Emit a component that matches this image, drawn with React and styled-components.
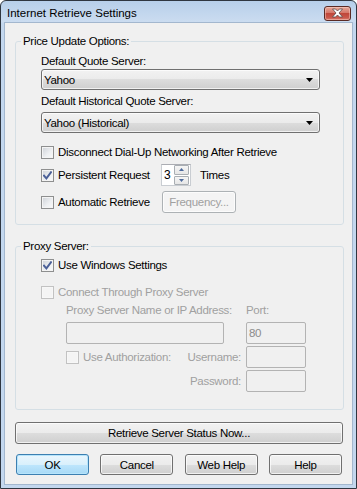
import styled, { createGlobalStyle } from "styled-components";

const GlobalStyle = createGlobalStyle`
  html, body {
    margin: 0;
    padding: 0;
    background: #ffffff;
  }
  body {
    font-family: "Liberation Sans", Arial, sans-serif;
  }
`;

const Window = styled.div`
  box-sizing: border-box;
  width: 357px;
  height: 489px;
  border: 1px solid #2f3640;
  border-radius: 6px 6px 0 0;
  background: linear-gradient(#b7cfea, #cbdcf0 21px, #c3d7ee 22px, #c3d7ee);
  display: flex;
  flex-direction: column;
  overflow: hidden;
`;

const TitleBar = styled.div`
  height: 21px;
  display: flex;
  align-items: center;
  justify-content: space-between;
  padding: 0 5px 0 6px;
`;

const Title = styled.span`
  font-size: 11.5px;
  color: #000;
  padding-top: 3px;
`;

const CloseButton = styled.div`
  box-sizing: border-box;
  width: 27px;
  height: 15px;
  margin-top: 3px;
  border: 1px solid #5a2a24;
  border-radius: 3px;
  background: linear-gradient(#e6a898, #d5776a 45%, #c0473a 50%, #c8564a 80%, #d97d6e);
  box-shadow: inset 0 0 0 1px rgba(255, 220, 210, 0.45);
  display: flex;
  align-items: center;
  justify-content: center;
`;

const Client = styled.div`
  flex: 1;
  margin: 0 3px 3px;
  border: 1px solid #a3b7ce;
  background: #f0f0f0;
  padding: 11px 8px 0 10px;
  display: flex;
  flex-direction: column;
  font-size: 11.5px;
  letter-spacing: -0.3px;
  color: #000;
`;

const Group = styled.fieldset`
  margin: ${(p) => p.$top || 0}px 0 0;
  padding: 0 8px ${(p) => p.$bottom}px 5px;
  border: 1px solid #d5dfe5;
  border-radius: 3px;
  min-width: 0;
`;

const Legend = styled.legend`
  padding: 0 2px;
  line-height: 14px;
`;

const GroupBody = styled.div`
  padding-left: 20px;
  padding-top: ${(p) => p.$top || 0}px;
  display: flex;
  flex-direction: column;
  align-items: flex-start;
`;

const FieldLabel = styled.div`
  line-height: 14px;
  margin-top: ${(p) => p.$top || 0}px;
  color: ${(p) => (p.$disabled ? "#a0a0a0" : "#000")};
`;

const Combo = styled.div`
  box-sizing: border-box;
  width: 279px;
  height: 21px;
  margin-top: ${(p) => p.$top || 0}px;
  padding: 0 6px 0 2px;
  border: 1px solid #707070;
  border-radius: 3px;
  background: linear-gradient(#f2f2f2, #ebebeb 50%, #dddddd 50%, #cfcfcf);
  box-shadow: inset 0 0 0 1px rgba(255, 255, 255, 0.7);
  display: flex;
  align-items: center;
  justify-content: space-between;
`;

const Row = styled.div`
  display: flex;
  align-items: center;
  height: ${(p) => p.$h || 16}px;
  margin-top: ${(p) => p.$top || 0}px;
`;

const CheckLabel = styled.label`
  display: flex;
  align-items: center;
  width: ${(p) => (p.$w ? `${p.$w}px` : "auto")};
  color: ${(p) => (p.$disabled ? "#a0a0a0" : "#000")};
`;

const Box = styled.span`
  box-sizing: border-box;
  width: 13px;
  height: 13px;
  flex: none;
  margin-right: 4px;
  border: 1px solid ${(p) => (p.$disabled ? "#c2c2c2" : "#8e8f8f")};
  background: ${(p) =>
    p.$disabled
      ? "#f4f4f4"
      : "linear-gradient(135deg, #cdd1d7, #eef0f2 60%, #fafafa)"};
  box-shadow: inset 0 0 0 1px ${(p) => (p.$disabled ? "#f7f7f7" : "#f4f4f4")};
  display: flex;
  align-items: center;
  justify-content: center;
`;

const Spinner = styled.div`
  box-sizing: border-box;
  width: 30px;
  height: 22px;
  display: flex;
  border: 1px solid #c9cdd2;
  border-top-color: #abadb3;
  background: #ffffff;
`;

const SpinValue = styled.div`
  flex: 1;
  padding: 3px 0 0 2px;
  font-size: 12px;
`;

const SpinButtons = styled.div`
  width: 15px;
  display: flex;
  flex-direction: column;
  gap: 1px;
  padding: 0 1px 0 0;
`;

const SpinButton = styled.div`
  box-sizing: border-box;
  flex: 1;
  border: 1px solid #a9aeb3;
  border-radius: 1px;
  background: linear-gradient(#f5f5f5, #e6e6e6);
  display: flex;
  align-items: center;
  justify-content: center;
`;

const Suffix = styled.span`
  margin-left: 9px;
`;

const PushButton = styled.button`
  box-sizing: border-box;
  width: ${(p) => (p.$w ? `${p.$w}px` : "100%")};
  height: ${(p) => p.$h || 21}px;
  margin: 0;
  padding: 0;
  border: 1px solid
    ${(p) => (p.$primary ? "#3c7fb1" : p.disabled ? "#adb2b5" : "#707070")};
  border-radius: 3px;
  background: ${(p) =>
    p.$primary
      ? "linear-gradient(#eaf6fd, #d9f0fc 50%, #bee6fd 50%, #a7d9f5)"
      : p.disabled
      ? "#f4f4f4"
      : "linear-gradient(#f2f2f2, #ebebeb 50%, #dddddd 50%, #cfcfcf)"};
  box-shadow: inset 0 0 0 1px
    ${(p) => (p.$primary ? "#b6e4fb" : "rgba(255, 255, 255, 0.7)")};
  font: inherit;
  letter-spacing: inherit;
  color: ${(p) => (p.disabled ? "#a0a0a0" : "#000")};
`;

const ProxyGrid = styled.div`
  margin: 3px 0 0 25px;
  display: grid;
  grid-template-columns: 180px 60px;
  grid-template-rows: 17px 22px 22px 22px;
  row-gap: 2px;
  color: #a0a0a0;
`;

const GridLabel = styled.div`
  line-height: 14px;
`;

const Edit = styled.div`
  box-sizing: border-box;
  width: ${(p) => p.$w}px;
  height: 22px;
  border: 1px solid #b3b3b3;
  border-radius: 2px;
  background: #f0f0f0;
  padding: 3px 0 0 2px;
  line-height: 14px;
  color: #8c8c8c;
`;

const AuthCell = styled.div`
  display: flex;
  align-items: center;
  justify-content: space-between;
  padding-right: 5px;
`;

const RightLabel = styled.div`
  display: flex;
  align-items: center;
  justify-content: flex-end;
  padding-right: 5px;
`;

const StatusArea = styled.div`
  margin-top: 12px;
  padding-right: 1px;
`;

const ButtonRow = styled.div`
  margin-top: 10px;
  padding: 0 2px 0 1px;
  display: flex;
  justify-content: space-between;
`;

function CloseGlyph() {
  return (
    <svg width="13" height="10" viewBox="0 0 13 10">
      <path
        d="M1.5 1 H4.5 L6.5 3 L8.5 1 H11.5 L8 5 L11.5 9 H8.5 L6.5 7 L4.5 9 H1.5 L5 5 Z"
        fill="#ffffff"
        stroke="#5b4b4b"
        strokeWidth="0.8"
        strokeLinejoin="round"
      />
    </svg>
  );
}

function DropArrow() {
  return (
    <svg width="7" height="4" viewBox="0 0 7 4">
      <polygon points="0,0 7,0 3.5,4" fill="#000000" />
    </svg>
  );
}

function Tick() {
  return (
    <svg width="9" height="9" viewBox="0 0 9 9">
      <path
        d="M1 4.6 L3.4 7.4 L8 1.2"
        fill="none"
        stroke="#4a5f97"
        strokeWidth="1.9"
        strokeLinecap="square"
      />
    </svg>
  );
}

function SpinArrow({ up }) {
  return (
    <svg width="5" height="3" viewBox="0 0 5 3">
      <polygon points={up ? "0,3 5,3 2.5,0" : "0,0 5,0 2.5,3"} fill="#4d6a9c" />
    </svg>
  );
}

function Check({ label, checked, disabled, width }) {
  return (
    <CheckLabel $w={width} $disabled={disabled}>
      <Box $disabled={disabled}>{checked && <Tick />}</Box>
      {label}
    </CheckLabel>
  );
}

export default function App() {
  return (
    <>
      <GlobalStyle />
      <Window>
        <TitleBar>
          <Title>Internet Retrieve Settings</Title>
          <CloseButton>
            <CloseGlyph />
          </CloseButton>
        </TitleBar>
        <Client>
          <Group $bottom={11}>
            <Legend>Price Update Options:</Legend>
            <GroupBody $top={6}>
              <FieldLabel>Default Quote Server:</FieldLabel>
              <Combo $top={1}>
                <span>Yahoo</span>
                <DropArrow />
              </Combo>
              <FieldLabel $top={4}>Default Historical Quote Server:</FieldLabel>
              <Combo $top={4}>
                <span>Yahoo (Historical)</span>
                <DropArrow />
              </Combo>
              <Row $top={11}>
                <Check label="Disconnect Dial-Up Networking After Retrieve" />
              </Row>
              <Row $top={4} $h={22}>
                <Check label="Persistent Request" checked width={120} />
                <Spinner>
                  <SpinValue>3</SpinValue>
                  <SpinButtons>
                    <SpinButton>
                      <SpinArrow up />
                    </SpinButton>
                    <SpinButton>
                      <SpinArrow />
                    </SpinButton>
                  </SpinButtons>
                </Spinner>
                <Suffix>Times</Suffix>
              </Row>
              <Row $top={5} $h={22}>
                <Check label="Automatic Retrieve" width={121} />
                <PushButton disabled $w={74} $h={22}>
                  Frequency...
                </PushButton>
              </Row>
            </GroupBody>
          </Group>

          <Group $top={14} $bottom={17}>
            <Legend>Proxy Server:</Legend>
            <GroupBody>
              <Row $top={4}>
                <Check label="Use Windows Settings" checked />
              </Row>
              <Row $top={11}>
                <Check label="Connect Through Proxy Server" disabled />
              </Row>
            </GroupBody>
            <GroupBody>
              <ProxyGrid>
                <GridLabel>Proxy Server Name or IP Address:</GridLabel>
                <GridLabel>Port:</GridLabel>
                <Edit $w={158} />
                <Edit $w={60}>80</Edit>
                <AuthCell>
                  <Check label="Use Authorization:" disabled />
                  <span>Username:</span>
                </AuthCell>
                <Edit $w={60} />
                <RightLabel>Password:</RightLabel>
                <Edit $w={60} />
              </ProxyGrid>
            </GroupBody>
          </Group>

          <StatusArea>
            <PushButton $h={22}>Retrieve Server Status Now...</PushButton>
          </StatusArea>

          <ButtonRow>
            <PushButton $primary $w={73}>
              OK
            </PushButton>
            <PushButton $w={73}>Cancel</PushButton>
            <PushButton $w={73}>Web Help</PushButton>
            <PushButton $w={73}>Help</PushButton>
          </ButtonRow>
        </Client>
      </Window>
    </>
  );
}
